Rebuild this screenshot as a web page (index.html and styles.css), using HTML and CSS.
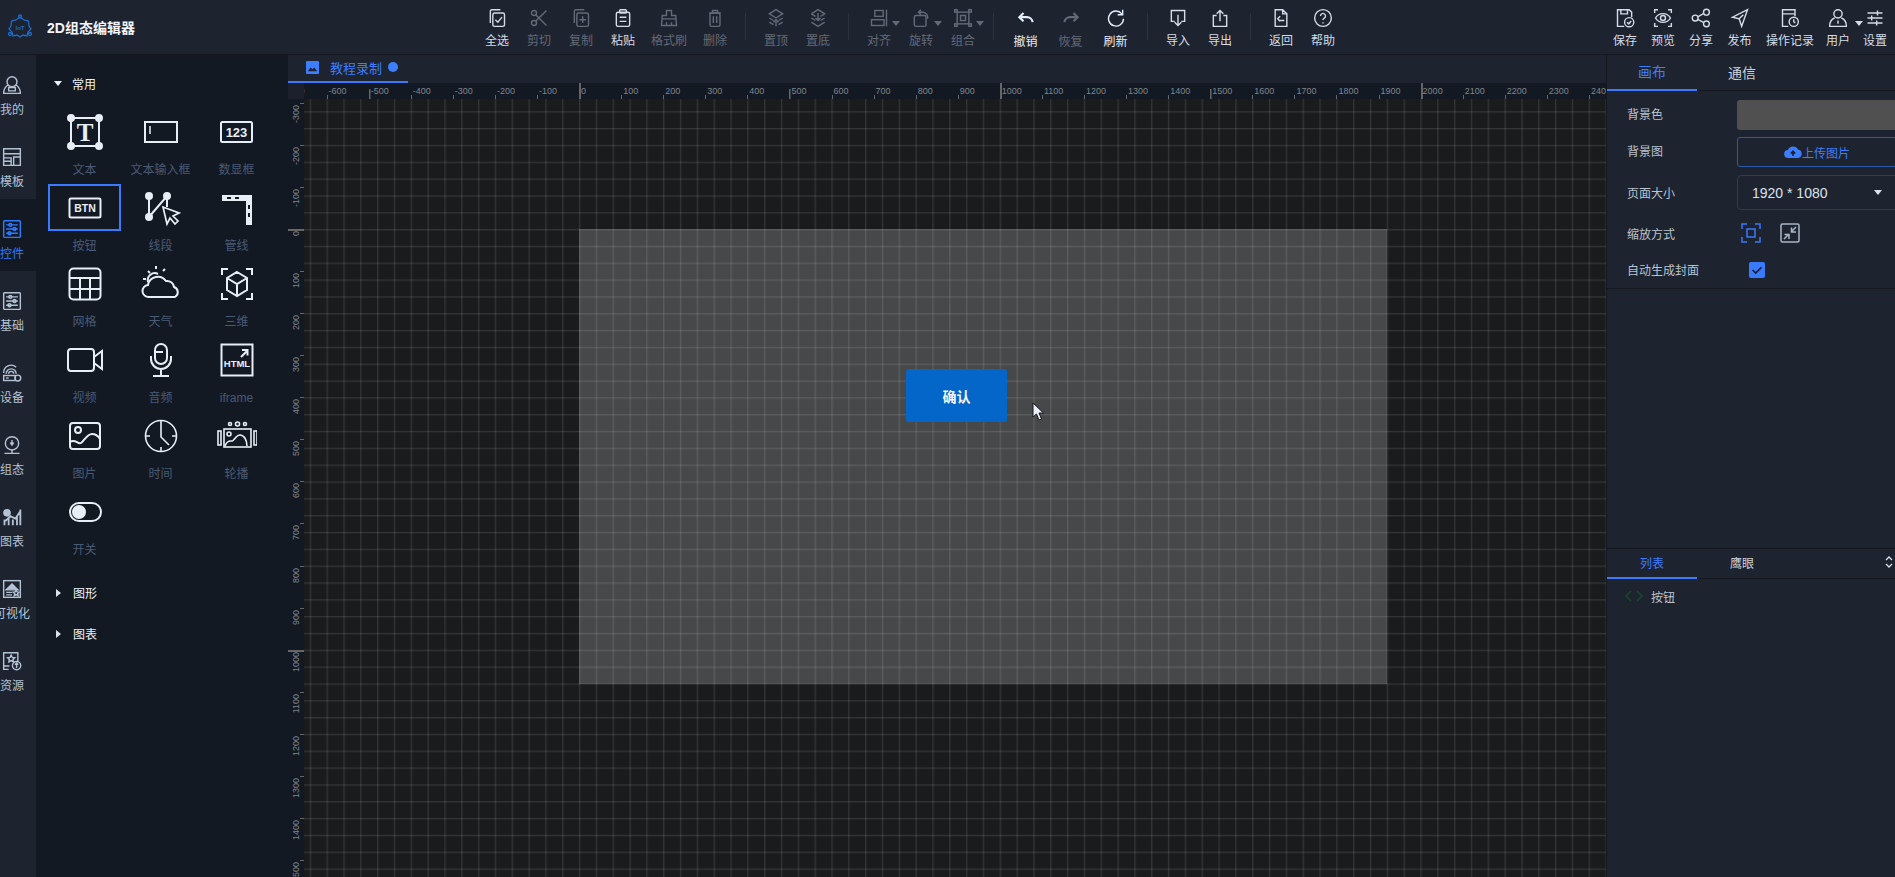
FILE: index.html
```html
<!DOCTYPE html>
<html lang="zh-CN">
<head>
    <meta charset="UTF-8">
    <title>2D组态编辑器</title>
    <link rel="stylesheet" href="styles.css">
</head>
<body>
<div class="app">

    <header class="topbar">
        <div class="brand">
            <svg class="logo" viewBox="0 0 26 26" fill="none" stroke="currentColor" stroke-width="1.3">
                <path d="M13 3l4 3 4.500 1 .5 5 2 3-3 3-1 4-4-1-3 2-3-2-4 1-1-4-3-3 2-3 .5-5 4.500-1z"/>
                <circle cx="13" cy="2.500" r="1.500"/><circle cx="3" cy="20" r="1.500"/><circle cx="23" cy="20" r="1.500"/>
                <text x="13" y="15.500" text-anchor="middle" class="logo-text">IoT</text>
            </svg>
            <span class="brand-name">2D组态编辑器</span>
        </div>

        <div class="tools">
            <div class="tool"><svg viewBox="0 0 24 24"><rect x="7" y="6" width="14" height="16" rx="2"/><path d="M4 18V4a2 2 0 0 1 2-2h10"/><path d="M10 14l3 3 5-6"/></svg><span>全选</span></div>
            <div class="tool off"><svg viewBox="0 0 24 24"><circle cx="6" cy="6" r="3"/><circle cx="6" cy="18" r="3"/><path d="M8 8l13 13M8 16L21 3"/></svg><span>剪切</span></div>
            <div class="tool off"><svg viewBox="0 0 24 24"><rect x="7" y="6" width="14" height="16" rx="2"/><path d="M4 18V4a2 2 0 0 1 2-2h10M14 10v8M10 14h8"/></svg><span>复制</span></div>
            <div class="tool"><svg viewBox="0 0 24 24"><rect x="4" y="5" width="16" height="17" rx="2"/><rect x="8" y="2" width="8" height="4" rx="1"/><path d="M8 11h8M8 16h8"/></svg><span>粘贴</span></div>
            <div class="tool wide off"><svg viewBox="0 0 24 24"><path d="M9 3h6v6h5l1 12H3L4 9h5zM4 13h16M9 21v-4M15 21v-4"/></svg><span>格式刷</span></div>
            <div class="tool off"><svg viewBox="0 0 24 24"><path d="M5 6h14M9 6V3h6v3"/><rect x="6" y="6" width="12" height="16" rx="2"/><path d="M10 10v8M14 10v8"/></svg><span>删除</span></div>
            <i class="sep"></i>
            <div class="tool off"><svg viewBox="0 0 24 24"><path d="M12 2l8 5-8 5-8-5zM4 12l5 3M20 12l-5 3M4 17l5 3M20 17l-5 3M12 22v-8M9 17l3-3 3 3"/></svg><span>置顶</span></div>
            <div class="tool off"><svg viewBox="0 0 24 24"><path d="M4 7l8-5 8 5-5 3M9 10L4 7M4 12l5 3M20 12l-5 3M4 17l8 5 8-5M12 6v9M9 12l3 3 3-3"/></svg><span>置底</span></div>
            <i class="sep"></i>
            <div class="tool off has-caret"><svg viewBox="0 0 24 24"><rect x="7" y="3" width="10" height="7"/><rect x="3" y="14" width="15" height="7"/><path d="M21 2v20"/></svg><span>对齐</span><b class="caret"></b></div>
            <div class="tool off has-caret"><svg viewBox="0 0 24 24"><rect x="4" y="9" width="14" height="13" rx="2"/><path d="M9 5h5a6 6 0 0 1 6 6v2M12 2L9 5l3 3"/></svg><span>旋转</span><b class="caret"></b></div>
            <div class="tool off has-caret"><svg viewBox="0 0 24 24"><rect x="5" y="5" width="14" height="14"/><rect x="2" y="2" width="3" height="3"/><rect x="19" y="2" width="3" height="3"/><rect x="2" y="19" width="3" height="3"/><rect x="19" y="19" width="3" height="3"/><path d="M9 9h6v6H9z"/></svg><span>组合</span><b class="caret"></b></div>
            <i class="sep"></i>
            <div class="tool mid bright"><svg viewBox="0 0 24 24" class="thick"><path d="M9 6l-5 5 5 5"/><path d="M4 11h9a7 7 0 0 1 7 6"/></svg><span>撤销</span></div>
            <div class="tool mid off low"><svg viewBox="0 0 24 24" class="thick"><path d="M15 6l5 5-5 5"/><path d="M20 11h-9a7 7 0 0 0-7 6"/></svg><span>恢复</span></div>
            <div class="tool mid bright"><svg viewBox="0 0 24 24"><path d="M19 7a9 9 0 1 0 2 6"/><path d="M20 2v6h-6"/></svg><span>刷新</span></div>
            <i class="sep"></i>
            <div class="tool"><svg viewBox="0 0 24 24"><path d="M8 16H4V3h16v13h-4M12 8v13M8 17l4 4 4-4"/></svg><span>导入</span></div>
            <div class="tool"><svg viewBox="0 0 24 24"><path d="M8 9H4v13h16V9h-4M12 16V3M8 7l4-4 4 4"/></svg><span>导出</span></div>
            <i class="sep"></i>
            <div class="tool"><svg viewBox="0 0 24 24"><path d="M5 2h9l5 5v15H5zM14 2v5h5M9 15h7M11 10l-3 3 3 3"/></svg><span>返回</span></div>
            <div class="tool"><svg viewBox="0 0 24 24"><circle cx="12" cy="12" r="10"/><path d="M9 9.500a3 3 0 1 1 4.500 2.600c-1 .6-1.500 1.200-1.500 2.400M12 17v1.500"/></svg><span>帮助</span></div>
        </div>

        <div class="tools-right">
            <div class="tool t38"><svg viewBox="0 0 24 24"><path d="M11 22H3V2h14l3 3v6M7 2v5h8V2"/><circle cx="17" cy="17" r="5.500"/><path d="M14.500 17l2 2 3-3.500"/></svg><span>保存</span></div>
            <div class="tool t38"><svg viewBox="0 0 24 24"><path d="M2 6V2h4M18 2h4v4M22 18v4h-4M6 22H2v-4"/><path d="M3 12c4-7 14-7 18 0-4 7-14 7-18 0z"/><circle cx="12" cy="12" r="3"/></svg><span>预览</span></div>
            <div class="tool t38"><svg viewBox="0 0 24 24"><circle cx="18.500" cy="5" r="3.500"/><circle cx="5" cy="12" r="3.500"/><circle cx="18.500" cy="19" r="3.500"/><path d="M8 10.500l7.500-4M8 13.500l7.500 4"/></svg><span>分享</span></div>
            <div class="tool t39"><svg viewBox="0 0 24 24"><path d="M21 2L3 11l8 2 3 9zM11 13l5-5"/></svg><span>发布</span></div>
            <div class="tool t62"><svg viewBox="0 0 24 24"><path d="M10 22H3V2h15v8M3 7h15"/><circle cx="16.500" cy="16.500" r="5.500"/><path d="M16.500 13.500v3l2 1.500"/></svg><span>操作记录</span></div>
            <div class="tool t34 has-caret"><svg viewBox="0 0 24 24"><circle cx="12" cy="7" r="5"/><path d="M8 12c-3 1-6 4-6 10h20c0-6-3-9-6-10M12 15v4"/></svg><span>用户</span><b class="caret"></b></div>
            <div class="tool t40"><svg viewBox="0 0 24 24"><path d="M3 6h18M3 12h18M3 18h18M15 3v6M8 9v6M14 15v6"/></svg><span>设置</span></div>
        </div>
    </header>

    <div class="body">
        <nav class="rail">
            <a class="rail-item"><svg viewBox="0 0 24 24"><circle cx="12" cy="8" r="6"/><path d="M7 12c-3 2-5 5-5 10h20c0-5-2-8-5-10M8 15h8v4H8z"/></svg><span>我的</span></a>
            <a class="rail-item"><svg viewBox="0 0 24 24"><path d="M2 2h20v20H2zM2 8h20M2 13h9v9M11 13v4H2M14 12h8v10h-8z"/></svg><span>模板</span></a>
            <a class="rail-item active"><svg viewBox="0 0 24 24"><rect x="2" y="2" width="20" height="20" rx="1"/><path d="M5 7h14M5 12h14M5 17h14"/><circle cx="10" cy="7" r="1.800"/><circle cx="15" cy="12" r="1.800"/><circle cx="9" cy="17" r="1.800"/></svg><span>控件</span></a>
            <a class="rail-item"><svg viewBox="0 0 24 24"><rect x="2" y="2" width="20" height="20" rx="1"/><path d="M5 7h14M5 12h14M5 17h14"/><circle cx="10" cy="7" r="1.800"/><circle cx="15" cy="12" r="1.800"/><circle cx="9" cy="17" r="1.800"/></svg><span>基础</span></a>
            <a class="rail-item"><svg viewBox="0 0 24 24"><path d="M5 13a6 6 0 0 1 12 0M2 12a9 9 0 0 1 15-7M8 13a3 3 0 0 1 6 0"/><rect x="2" y="15" width="14" height="6"/><circle cx="19" cy="18" r="3.500"/><path d="M5 18h3"/></svg><span>设备</span></a>
            <a class="rail-item"><svg viewBox="0 0 24 24"><circle cx="12" cy="10" r="8"/><path d="M12 6v5M10 9l2 3 2-3M3 22h18M12 18v4"/></svg><span>组态</span></a>
            <a class="rail-item"><svg viewBox="0 0 24 24" class="thick"><circle class="fill" cx="6" cy="7" r="3.500"/><path d="M3 22v-7M8 22v-9M13 22v-7M18 22v-11M22 22V3M4 17l6-6 6 3 6-9"/></svg><span>图表</span></a>
            <a class="rail-item"><svg viewBox="0 0 24 24"><rect x="2" y="2" width="20" height="20"/><path class="fill" d="M5 13l7-7 7 7z"/><path d="M5 16h7M5 19h7M17 13l1.200 2.500 2.300.3-1.700 1.700.5 2.500-2.300-1.200-2.300 1.200.5-2.500-1.700-1.700 2.300-.3z"/></svg><span>可视化</span></a>
            <a class="rail-item"><svg viewBox="0 0 24 24"><path d="M8 22H2V2h17v10M2 18h7M11 5l1.300 2.700 3 .4-2.200 2 .6 3-2.700-1.500-2.700 1.500.6-3-2.200-2 3-.4z"/><circle cx="17.500" cy="17.500" r="5"/><path d="M17.500 20.500v-6M15.500 16.500l2-2 2 2"/></svg><span>资源</span></a>
        </nav>

        <aside class="panel">
            <div class="group-head"><b class="caret down"></b>常用</div>
            <div class="comps">
                <div class="comp"><div class="comp-icon"><svg viewBox="0 0 40 40"><rect x="6" y="6" width="28" height="28"/><circle class="dot" cx="6" cy="6" r="3"/><circle class="dot" cx="34" cy="6" r="3"/><circle class="dot" cx="6" cy="34" r="3"/><circle class="dot" cx="34" cy="34" r="3"/><text x="20" y="29" class="t-serif">T</text></svg></div><span>文本</span></div>
                <div class="comp"><div class="comp-icon"><svg viewBox="0 0 40 40"><rect x="4" y="10" width="32" height="20"/><path d="M9 14v8" class="thin"/></svg></div><span>文本输入框</span></div>
                <div class="comp"><div class="comp-icon"><svg viewBox="0 0 40 40"><rect x="4" y="10" width="31" height="20" rx="1.500"/><text x="19.500" y="25" class="t-small">123</text></svg></div><span>数显框</span></div>
                <div class="comp selected"><div class="comp-icon"><svg viewBox="0 0 40 40"><rect x="4.500" y="10.500" width="31" height="19" rx="1.500"/><text x="20" y="24" class="t-btn">BTN</text></svg></div><span>按钮</span></div>
                <div class="comp"><div class="comp-icon"><svg viewBox="0 0 40 40"><path d="M8 8v21L26 8v11"/><circle class="dot" cx="8" cy="8" r="3"/><circle class="dot" cx="8" cy="29" r="3"/><circle class="dot" cx="26" cy="8" r="3"/><path class="bg" d="M22 19l4 17 3-6 5 6 3-3-5-5 6-3z"/></svg></div><span>线段</span></div>
                <div class="comp"><div class="comp-icon"><svg viewBox="0 0 40 40"><path class="solid" d="M5 7h30v30h-6V13H5z"/><path class="dash" d="M10 10h4M18 10h4M32 17v4M32 25v4"/></svg></div><span>管线</span></div>

                <div class="comp"><div class="comp-icon"><svg viewBox="0 0 40 40"><rect x="4.500" y="4.500" width="31" height="31" rx="4"/><path d="M4.500 14h31M4.500 25h31M15 14v21M25 14v21"/></svg></div><span>网格</span></div>
                <div class="comp"><div class="comp-icon"><svg viewBox="0 0 40 40"><path d="M8 33a6 6 0 0 1-1-12 10 10 0 0 1 18-4 7 7 0 0 1 8 6 5.500 5.500 0 0 1 1 10z"/><path d="M7 18a7 7 0 0 1 10-8M2 15h3M7 7l2 2M15 2v3M24 5l-2 2"/></svg></div><span>天气</span></div>
                <div class="comp"><div class="comp-icon"><svg viewBox="0 0 40 40"><path d="M5 11V5h6M29 5h6v6M35 29v6h-6M11 35H5v-6M20 8l10 6v12l-10 6-10-6V14zM10 14l10 6 10-6M20 20v12"/></svg></div><span>三维</span></div>
                <div class="comp"><div class="comp-icon"><svg viewBox="0 0 40 40"><rect x="3" y="9" width="26" height="22" rx="3"/><path d="M29 17l8-6v18l-8-6"/></svg></div><span>视频</span></div>
                <div class="comp"><div class="comp-icon"><svg viewBox="0 0 40 40"><rect x="14" y="4" width="12" height="20" rx="6"/><path d="M14 12h8M10 16v3a10 10 0 0 0 20 0v-3M20 29v6M12 36h16"/></svg></div><span>音频</span></div>
                <div class="comp"><div class="comp-icon"><svg viewBox="0 0 40 40"><rect x="4.500" y="4.500" width="31" height="31"/><text x="20" y="27" class="t-html">HTML</text><path d="M24 17l6-6M25 10h5.500v5.500"/></svg></div><span>iframe</span></div>
                <div class="comp"><div class="comp-icon"><svg viewBox="0 0 40 40"><rect x="5" y="7" width="30" height="26" rx="3"/><circle cx="13" cy="14" r="3"/><path d="M5 26c5-4 8 3 11 1s6-9 11-9 8 5 8 5"/></svg></div><span>图片</span></div>
                <div class="comp"><div class="comp-icon"><svg viewBox="0 0 40 40" class="fine"><circle cx="20" cy="20" r="15.500"/><path d="M20 4v5M20 31v5M4 20h5M31 20h5M20 9v12l8 8"/></svg></div><span>时间</span></div>
                <div class="comp"><div class="comp-icon"><svg viewBox="0 0 40 40" class="fine"><rect x="7" y="13" width="27" height="18"/><rect x="1" y="15" width="3" height="14"/><rect x="37" y="15" width="3" height="14"/><circle cx="13" cy="8" r="1.500"/><circle cx="20.500" cy="8" r="2"/><circle cx="28" cy="8" r="1.500"/><circle cx="12" cy="18" r="2"/><path d="M8 30c2-6 5-5 7-5s4-6 8-6 7 5 7 11"/></svg></div><span>轮播</span></div>
                <div class="comp"><div class="comp-icon"><svg viewBox="0 0 40 40"><rect x="5" y="11" width="31" height="18" rx="9"/><circle class="dot" cx="14" cy="20" r="6"/></svg></div><span>开关</span></div>
            </div>
            <div class="group-head closed"><b class="caret right"></b>图形</div>
            <div class="group-head"><b class="caret right"></b>图表</div>
        </aside>

        <main class="work">
            <div class="tabbar">
                <div class="tab">
                    <svg class="tab-pic" viewBox="0 0 14 14"><path d="M1 0h12a1 1 0 0 1 1 1v12a1 1 0 0 1-1 1H1a1 1 0 0 1-1-1V1a1 1 0 0 1 1-1z"/><path class="pic-hill" d="M2 11l3-4 2 2 2-2 3 4z"/></svg>
                    <span>教程录制</span>
                    <i class="tab-dot"></i>
                </div>
            </div>
            <div class="ruler-row">
                <div class="corner"></div>
                <div class="ruler-top">
                    <span class="rt">-700</span><span class="rt">-600</span><span class="rt mid-tick">-500</span><span class="rt">-400</span><span class="rt">-300</span><span class="rt">-200</span><span class="rt">-100</span>
                    <span class="rt big-tick">0</span><span class="rt">100</span><span class="rt">200</span><span class="rt">300</span><span class="rt">400</span><span class="rt mid-tick">500</span><span class="rt">600</span><span class="rt">700</span><span class="rt">800</span><span class="rt">900</span>
                    <span class="rt big-tick">1000</span><span class="rt">1100</span><span class="rt">1200</span><span class="rt">1300</span><span class="rt">1400</span><span class="rt mid-tick">1500</span><span class="rt">1600</span><span class="rt">1700</span><span class="rt">1800</span><span class="rt">1900</span>
                    <span class="rt big-tick">2000</span><span class="rt">2100</span><span class="rt">2200</span><span class="rt">2300</span><span class="rt">2400</span>
                </div>
            </div>
            <div class="canvas-row">
                <div class="ruler-left">
                    <div class="rl"><span>-300</span></div><div class="rl"><span>-200</span></div><div class="rl"><span>-100</span></div>
                    <div class="rl big-tick"><span>0</span></div><div class="rl"><span>100</span></div><div class="rl"><span>200</span></div><div class="rl"><span>300</span></div><div class="rl"><span>400</span></div>
                    <div class="rl"><span>500</span></div><div class="rl"><span>600</span></div><div class="rl"><span>700</span></div><div class="rl"><span>800</span></div><div class="rl"><span>900</span></div>
                    <div class="rl big-tick"><span>1000</span></div><div class="rl"><span>1100</span></div><div class="rl"><span>1200</span></div><div class="rl"><span>1300</span></div><div class="rl"><span>1400</span></div><div class="rl"><span>1500</span></div>
                </div>
                <div class="viewport">
                    <div class="stage">
                        <div class="stage-btn">确认</div>
                        <svg class="pointer" viewBox="0 0 12 19"><path d="M1 1v14l3.500-3 2.500 6 2.500-1-2.500-6h4.500z"/></svg>
                    </div>
                </div>
            </div>
        </main>

        <aside class="props">
            <div class="props-top">
                <div class="ptabs">
                    <div class="ptab on">画布</div>
                    <div class="ptab">通信</div>
                </div>
                <div class="form">
                    <div class="row r-color"><label>背景色</label><div class="swatch"></div></div>
                    <div class="row r-upload">
                        <label>背景图</label>
                        <div class="upload">
                            <svg viewBox="0 0 18 14"><path d="M4.500 13a4 4 0 0 1-.6-8A5.500 5.500 0 0 1 14 4.500 4.300 4.300 0 0 1 14 13z"/><path class="up-arrow" d="M9 11V6.500M6.800 8.500L9 6.200l2.200 2.300"/></svg>上传图片
                        </div>
                    </div>
                    <div class="row r-select"><label>页面大小</label><div class="select">1920 * 1080<b class="caret down"></b></div></div>
                    <div class="row r-scale">
                        <label>缩放方式</label>
                        <svg class="scale on-scale" viewBox="0 0 20 20"><path d="M1 6V1h5M14 1h5v5M19 14v5h-5M6 19H1v-5"/><rect x="6" y="6" width="8" height="8"/></svg>
                        <svg class="scale" viewBox="0 0 20 20"><rect x="1" y="1" width="18" height="18" rx="1.500"/><path d="M11 9l5-5M11.500 4.500V9H16M9 11l-5 5M4.500 11.500H9V16"/></svg>
                    </div>
                    <div class="row r-check">
                        <label>自动生成封面</label>
                        <div class="check"><svg viewBox="0 0 16 16"><path d="M3 8l3.500 3.500L13 5"/></svg></div>
                    </div>
                </div>
            </div>
            <div class="props-bottom">
                <div class="ptabs small">
                    <div class="ptab on">列表</div>
                    <div class="ptab">鹰眼</div>
                    <svg class="updown" viewBox="0 0 8 14"><path d="M1 5l3-3 3 3M1 9l3 3 3-3"/></svg>
                </div>
                <div class="layer">
                    <svg viewBox="0 0 20 12"><path d="M7 1L2 6l5 5M13 1l5 5-5 5"/></svg>
                    <span>按钮</span>
                </div>
            </div>
        </aside>
    </div>
</div>
</body>
</html>
```

FILE: styles.css
```css
* {
    box-sizing: border-box;
}
html, body {
    margin: 0;
    padding: 0;
    height: 100%;
    overflow: hidden;
}
body {
    font-family: "Liberation Sans", "Noto Sans CJK SC", sans-serif;
    font-size: 12px;
    background-color: #1e2330;
    color: #d3dce8;
}
.app {
    display: flex;
    flex-direction: column;
    height: 100vh;
}

/* top bar */
.topbar {
    display: flex;
    flex: 0 0 55px;
    background-color: #1e2330;
    border-bottom: 1px solid #14171f;
    overflow: hidden;
}
.brand {
    display: flex;
    flex: 0 0 476px;
    align-items: center;
    padding-left: 7px;
}
.logo {
    width: 26px;
    height: 26px;
    color: #1c6bc9;
}
.logo-text {
    font-size: 6px;
    fill: #1c6bc9;
    stroke: none;
    font-weight: bold;
}
.brand-name {
    margin-left: 14px;
    font-size: 14px;
    font-weight: bold;
    color: #f2f5f9;
}
.tools {
    display: flex;
    flex: 1;
}
.tools-right {
    display: flex;
    flex: 0 0 285px;
}
.tool {
    position: relative;
    display: flex;
    flex: 0 0 42px;
    flex-direction: column;
    align-items: center;
    padding-top: 8px;
    color: #d3dce8;
}
.tool svg {
    width: 20px;
    height: 20px;
    fill: none;
    stroke: currentColor;
    stroke-width: 1.7;
}
.tool svg.thick {
    stroke-width: 2.6;
}
.tool span {
    margin-top: 4px;
    line-height: 18px;
    white-space: nowrap;
}
.tool.off {
    color: #626a78;
}
.tool.wide {
    flex-basis: 50px;
}
.tool.mid {
    flex-basis: 45px;
}
.tool.mid span {
    margin-top: 5px;
}
.tool.bright {
    color: #e3eefc;
}
.t38 { flex-basis: 38px; }
.t39 { flex-basis: 39px; }
.t62 { flex-basis: 62px; }
.t34 { flex-basis: 34px; }
.t40 { flex-basis: 40px; }
.sep {
    flex: 0 0 1px;
    height: 27px;
    margin: 13px 9px 0;
    background-color: #2c3240;
}
.caret {
    display: inline-block;
    width: 0;
    height: 0;
    border-left: 4px solid transparent;
    border-right: 4px solid transparent;
    border-top: 5px solid currentColor;
}
.has-caret .caret {
    position: absolute;
    top: 21px;
    left: 34px;
}

/* main row */
.body {
    display: flex;
    flex: 1;
    min-height: 0;
}
.rail {
    flex: 0 0 36px;
    background-color: #1e2330;
    overflow: hidden;
}
.rail-item {
    display: flex;
    flex-direction: column;
    align-items: center;
    width: 48px;
    height: 72px;
    margin-left: -12px;
    padding: 20px 0 0 0;
    color: #b3c3d4;
}
.rail-item svg {
    width: 20px;
    height: 20px;
    fill: none;
    stroke: currentColor;
    stroke-width: 1.7;
}
.rail-item svg.thick {
    stroke-width: 2.2;
}
.rail-item .fill {
    fill: currentColor;
}
.rail-item span {
    margin-top: 7px;
    line-height: 16px;
    white-space: nowrap;
}
.rail-item.active {
    width: 60px;
    padding-right: 12px;
    background-color: #121923;
    color: #2f7bff;
}

/* component panel */
.panel {
    flex: 0 0 252px;
    padding-top: 8px;
    background-color: #121923;
}
.group-head {
    display: flex;
    align-items: center;
    height: 41px;
    padding-left: 18px;
    color: #eef2f7;
}
.group-head .caret {
    margin-right: 10px;
}
.group-head .caret.right {
    width: 0;
    border-top: 4px solid transparent;
    border-bottom: 4px solid transparent;
    border-left: 5px solid #d9e2ec;
    border-right: 0;
    margin: 0 12px 0 2px;
}
.group-head.closed {
    margin-top: 8px;
}
.comps {
    display: grid;
    grid-template-columns: repeat(3, 76px);
    grid-auto-rows: 76px;
    margin: 4px 0 0 10.5px;
}
.comp {
    display: flex;
    flex-direction: column;
    align-items: center;
    color: #4a5a75;
}
.comp-icon {
    display: flex;
    align-items: center;
    justify-content: center;
    width: 73px;
    height: 47px;
    color: #e8eef5;
}
.comp.selected .comp-icon {
    border: 2px solid #3a7afe;
}
.comp svg {
    width: 40px;
    height: 40px;
    fill: none;
    stroke: currentColor;
    stroke-width: 2;
}
.comp svg.fine {
    stroke-width: 1.6;
}
.comp span {
    margin-top: 7px;
    line-height: 16px;
    white-space: nowrap;
}
.comp .dot {
    fill: currentColor;
}
.comp .thin {
    stroke-width: 1.5;
}
.comp .bg {
    fill: #121923;
    stroke-width: 1.7;
}
.comp .solid {
    fill: currentColor;
    stroke: none;
}
.comp .dash {
    stroke: #121923;
    stroke-width: 2;
}
.comp text {
    fill: currentColor;
    stroke: none;
    text-anchor: middle;
    font-weight: bold;
}
.t-serif {
    font-family: "Liberation Serif", serif;
    font-size: 25px;
}
.t-small {
    font-size: 13px;
}
.t-btn {
    font-size: 10.5px;
}
.t-html {
    font-size: 9.5px;
}

/* work area */
.work {
    display: flex;
    flex: 1;
    flex-direction: column;
    min-width: 0;
    border-right: 1px solid #14171f;
}
.tabbar {
    display: flex;
    flex: 0 0 28px;
    background-color: #1e2330;
}
.tab {
    display: flex;
    align-items: center;
    width: 120px;
    padding-left: 18px;
    padding-bottom: 2px;
    border-bottom: 2px solid #3a7afe;
    color: #3d7eff;
    font-size: 13px;
}
.tab-pic {
    width: 13px;
    height: 13px;
    fill: #3d7eff;
}
.pic-hill {
    fill: #1e2330;
}
.tab span {
    margin-left: 11px;
}
.tab-dot {
    width: 10px;
    height: 10px;
    margin-left: 6px;
    border-radius: 50%;
    background-color: #3d7eff;
}
.ruler-row {
    display: flex;
    flex: 0 0 16px;
}
.corner {
    flex: 0 0 16px;
    background-color: #1c202c;
}
.ruler-top {
    display: flex;
    flex: 1;
    overflow: hidden;
    padding-left: 0;
    background-color: #121923;
}
.rt {
    flex: 0 0 42.08px;
    padding-left: 2px;
    font-size: 9px;
    line-height: 16px;
    color: #80858d;
    background: linear-gradient(#666, #666) left bottom / 1px 4px no-repeat;
}
.rt:first-child {
    margin-left: -19.5px;
}
.rt.mid-tick {
    background-size: 1.5px 10px;
}
.rt.big-tick {
    background-size: 2px 16px;
}
.canvas-row {
    display: flex;
    flex: 1;
    min-height: 0;
}
.ruler-left {
    flex: 0 0 16px;
    padding-top: 3.7px;
    overflow: hidden;
    background-color: #121923;
}
.rl {
    display: flex;
    justify-content: center;
    align-items: flex-start;
    height: 42.08px;
    padding-top: 2px;
    background: linear-gradient(#666, #666) right top / 4px 1px no-repeat;
}
.rl.big-tick {
    background-size: 16px 2px;
}
.rl span {
    writing-mode: vertical-rl;
    transform: rotate(180deg);
    font-size: 9px;
    line-height: 14px;
    color: #80858d;
}
.viewport {
    position: relative;
    flex: 1;
    overflow: hidden;
    background-color: #1a1b1d;
    background-image:
        linear-gradient(90deg, rgba(255, 255, 255, .11) 1px, rgba(255, 255, 255, .04) 1px, rgba(255, 255, 255, .04) 2px, transparent 2px),
        linear-gradient(rgba(255, 255, 255, .11) 1px, rgba(255, 255, 255, .04) 1px, rgba(255, 255, 255, .04) 2px, transparent 2px);
    background-size: 16.83px 16.83px;
    background-position: 5.7px 12.2px;
}
.stage {
    position: absolute;
    left: 275px;
    top: 130px;
    width: 808px;
    height: 455px;
    background-color: rgba(255, 255, 255, .2);
}
.stage-btn {
    position: absolute;
    left: 327px;
    top: 140px;
    display: flex;
    align-items: center;
    justify-content: center;
    width: 101px;
    height: 53px;
    border-radius: 3px;
    background-color: #0466c8;
    color: #f3f7fb;
    font-size: 14px;
    font-weight: bold;
}
.pointer {
    position: absolute;
    left: 453px;
    top: 173px;
    width: 12px;
    height: 19px;
    fill: #e9edf5;
    stroke: #16181c;
    stroke-width: 1;
}

/* right panel */
.props {
    display: flex;
    flex: 0 0 288px;
    flex-direction: column;
    overflow: hidden;
    background-color: #1e2330;
}
.props-top {
    flex: 0 0 493px;
}
.props-bottom {
    flex: 1;
    border-top: 1px solid #14171f;
}
.ptabs {
    display: flex;
    align-items: stretch;
    height: 36px;
    border-bottom: 1px solid #14171f;
}
.ptabs.small {
    position: relative;
    height: 30px;
}
.ptab {
    display: flex;
    align-items: center;
    justify-content: center;
    width: 90px;
    padding-bottom: 2px;
    font-size: 14px;
    color: #c9d3df;
}
.ptabs.small .ptab {
    font-size: 12px;
}
.ptab.on {
    border-bottom: 2px solid #3a7afe;
    margin-bottom: -1px;
    color: #3d7eff;
}
.updown {
    position: absolute;
    right: 2px;
    top: 6px;
    width: 8px;
    height: 14px;
    fill: none;
    stroke: #d9e2ec;
    stroke-width: 1.3;
}
.form {
    padding: 9px 0 6px 20px;
    border-bottom: 1px solid #14171f;
}
.row {
    display: flex;
    align-items: center;
    color: #b9c4d0;
}
.row label {
    flex: 0 0 110px;
}
.r-color label,
.r-upload label {
    margin-bottom: 3px;
}
.r-check label {
    margin-bottom: 1px;
}
.r-color { height: 30px; }
.r-upload { height: 30px; margin-top: 7px; }
.r-select { height: 35px; margin-top: 8px; }
.r-scale { height: 24px; margin-top: 11px; }
.r-check { height: 24px; margin-top: 13px; }
.swatch {
    flex: 0 0 165px;
    height: 30px;
    border-radius: 3px;
    background-color: #505050;
}
.upload {
    display: flex;
    flex: 0 0 160px;
    align-items: center;
    justify-content: center;
    height: 30px;
    border: 1px solid #2a5cab;
    border-radius: 3px;
    color: #3d7eff;
}
.upload svg {
    width: 18px;
    height: 14px;
    fill: #3d7eff;
}
.up-arrow {
    fill: none;
    stroke: #1e2330;
    stroke-width: 1.6;
}
.select {
    display: flex;
    flex: 0 0 165px;
    align-items: center;
    height: 35px;
    padding-left: 14px;
    border: 1px solid #363b47;
    border-radius: 4px;
    font-size: 14px;
    color: #dbe2ea;
}
.select .caret {
    margin-left: 46px;
    color: #dbe2ea;
}
.scale {
    width: 20px;
    height: 20px;
    margin-left: 4px;
    margin-right: 15px;
    fill: none;
    stroke: #a8b6c5;
    stroke-width: 1.5;
}
.scale.on-scale {
    stroke: #3a7afe;
}
.check {
    display: flex;
    align-items: center;
    justify-content: center;
    width: 16px;
    height: 16px;
    margin-left: 12px;
    border-radius: 2px;
    background-color: #3a7afe;
}
.check svg {
    width: 14px;
    height: 14px;
    fill: none;
    stroke: #16202f;
    stroke-width: 2;
}
.layer {
    display: flex;
    align-items: center;
    height: 34px;
    padding-left: 17px;
    color: #b9c4d0;
}
.layer svg {
    width: 20px;
    height: 12px;
    margin-right: 7px;
    fill: none;
    stroke: #1a4a2a;
    stroke-width: 1.5;
}
```
